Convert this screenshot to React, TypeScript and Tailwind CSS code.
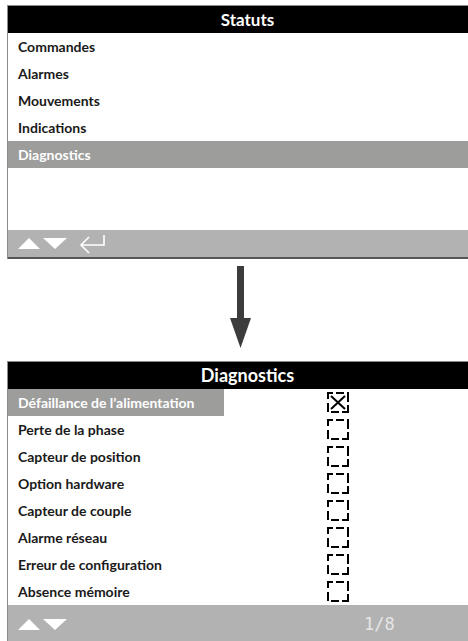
import React from 'react';

const font = { fontFamily: 'Lato, "Open Sans", "Liberation Sans", sans-serif' };

const statusItems = ['Commandes', 'Alarmes', 'Mouvements', 'Indications', 'Diagnostics'];

const diagItems = [
  { label: 'Défaillance de l’alimentation', checked: true },
  { label: 'Perte de la phase', checked: false },
  { label: 'Capteur de position', checked: false },
  { label: 'Option hardware', checked: false },
  { label: 'Capteur de couple', checked: false },
  { label: 'Alarme réseau', checked: false },
  { label: 'Erreur de configuration', checked: false },
  { label: 'Absence mémoire', checked: false },
];

function UpDown() {
  return (
    <svg width="52" height="14" viewBox="0 0 52 14">
      <polygon points="0,12 11,1 22,12" fill="#fff" />
      <polygon points="25,1 49,1 37,12" fill="#fff" />
    </svg>
  );
}

function EnterIcon() {
  return (
    <svg width="28" height="20" viewBox="0 0 28 20">
      <path d="M25 1 V11 H3" fill="none" stroke="#fff" strokeWidth="1.6" />
      <path d="M10 3 L2 11 L10 19" fill="none" stroke="#fff" strokeWidth="1.6" />
    </svg>
  );
}

function DashBox({ checked }: { checked: boolean }) {
  return (
    <svg width="22" height="21" viewBox="0 0 22 21">
      <g stroke="#000" strokeWidth="2" fill="none">
        <path d="M1 7 V1 H6" />
        <path d="M9 1 H17" />
        <path d="M20 1 H21 V10" />
        <path d="M21 13 V20 H15" />
        <path d="M12 20 H4" />
        <path d="M1 20 V11" />
        {checked && (
          <>
            <path d="M4 4 L18 17" />
            <path d="M18 4 L4 17" />
          </>
        )}
      </g>
    </svg>
  );
}

export default function App() {
  return (
    <div className="w-[468px] h-[641px] overflow-hidden bg-white pt-[5px] pl-[7px]" style={font}>
      <div className="w-[480px] border-l border-t border-[#8c8c8c]">
        <div className="h-[27px] bg-black text-white text-[17px] font-bold flex items-center justify-center">
          Statuts
        </div>
        {statusItems.map((item) => (
          <div
            key={item}
            className={`h-[27px] flex items-center pl-[10px] text-[14px] font-bold ${
              item === 'Diagnostics' ? 'bg-[#9d9d9c] text-white' : 'text-[#1a1a1a]'
            }`}
          >
            {item}
          </div>
        ))}
        <div className="h-[62px]" />
        <div className="h-[29px] bg-[#b2b2b2] flex items-center gap-[9px] pl-[10px] border-b-2 border-[#555]">
          <UpDown />
          <EnterIcon />
        </div>
      </div>

      <div className="h-[102px] pl-[223px] pt-[7px]">
        <svg width="22" height="82" viewBox="0 0 22 82">
          <rect x="7" y="0" width="7" height="54" fill="#3c3c3c" />
          <polygon points="0,52 21,52 10.5,82" fill="#3c3c3c" />
        </svg>
      </div>

      <div className="w-[480px] border-l border-t border-[#8c8c8c]">
        <div className="h-[27px] bg-black text-white text-[18px] font-bold flex items-center justify-center">
          Diagnostics
        </div>
        {diagItems.map((item, i) => (
          <div key={item.label} className="h-[27px] flex items-center">
            <div
              className={`w-[216px] h-full flex items-center pl-[10px] text-[14px] font-bold ${
                i === 0 ? 'bg-[#9d9d9c] text-white' : 'text-[#1a1a1a]'
              }`}
            >
              {item.label}
            </div>
            <div className="ml-[103px]">
              <DashBox checked={item.checked} />
            </div>
          </div>
        ))}
        <div className="h-[40px] bg-[#b2b2b2] flex items-center pl-[10px]">
          <UpDown />
          <span
            className="ml-[294px] text-[17px] text-[#e6e6e6]"
            style={{ fontFamily: '"DejaVu Sans Mono", monospace' }}
          >
            1/8
          </span>
        </div>
      </div>
    </div>
  );
}
